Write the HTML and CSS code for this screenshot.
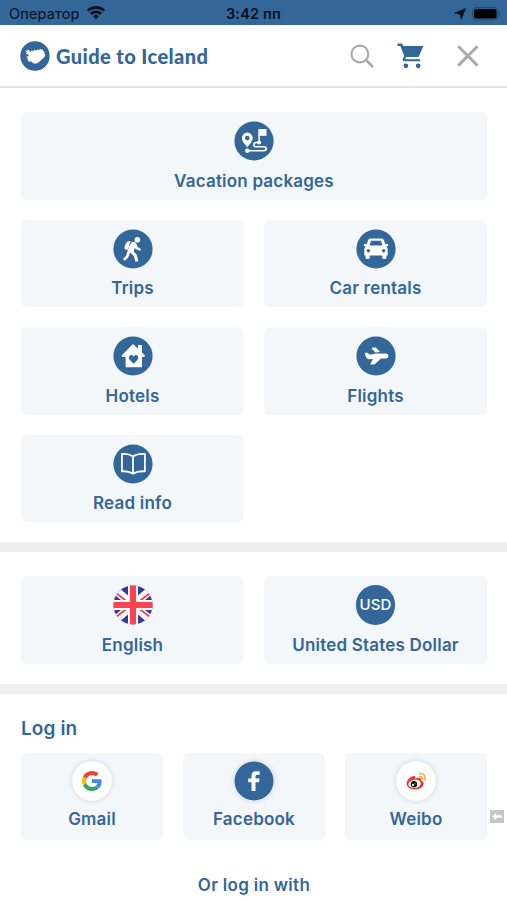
FILE: index.html
```html
<!DOCTYPE html>
<html lang="en">
<head>
<meta charset="utf-8">
<meta name="viewport" content="width=device-width, initial-scale=1">
<title>Guide to Iceland</title>
<link rel="stylesheet" href="styles.css">
</head>
<body>
<div class="status">
  <div class="carrier"><span>Оператор</span>
    <svg width="20" height="15" viewBox="0 0 20 15" fill="none" stroke="#06101c" stroke-width="2.7"><path d="M1.8 5.6a11.8 11.8 0 0 1 16.4 0M4.8 9a7.5 7.5 0 0 1 10.4 0"/><path d="M10 14.2 7 11.3a4.3 4.3 0 0 1 6 0z" fill="#06101c" stroke="none"/></svg>
  </div>
  <div class="time">3:42 пп</div>
  <div class="power">
    <svg width="12" height="12" viewBox="0 0 12 12"><path d="M11.5.5 7.2 11.4 6 6.2.7 5z" fill="#06101c" stroke="#06101c" stroke-width=".6"/></svg>
    <svg width="30" height="14" viewBox="0 0 30 14"><rect x=".6" y=".6" width="25.4" height="12.4" rx="4" fill="none" stroke="#234b73" stroke-width="1.1"/><rect x="2" y="2" width="22.6" height="9.6" rx="2.5" fill="#000"/><path d="M27.2 4.7q1.9 2 0 4.1z" fill="#1d4268"/></svg>
  </div>
</div>
<header class="header">
  <div class="brand">
    <svg width="30" height="30" viewBox="0 0 30 30"><circle cx="15" cy="15" r="14.7" fill="#336699"/><path d="m5.200 9.600 2.300.4-.4-1.800 2.200 1.200 1 1.800 1.500-2 1.100 1.200 1.400-1.600 1.500 1 1.600-1.400 1.400.7 1.700-1 1.300.7.800-.6.700 1.900 1.400.9-.4 1.600 1.100 1.400-1.400 2.800-2.600 1.900-2.300 2.200-2.800 1.900-2.900-.6-2.500-1.700-3.100-.1.700-1.900-2-.3 1.800-1.100-2.400-1.200 3-.8-.5-1.700-3-.5 1.700-.9z" fill="#fff"/></svg>
    <span>Guide to Iceland</span>
  </div>
  <div class="tools">
    <svg width="24" height="24" viewBox="0 0 24 24" fill="none" stroke="#aaa" stroke-width="2.1"><circle cx="9.9" cy="10" r="8.4"/><path d="m16 16 7 7" stroke-width="2.6"/></svg>
    <svg width="27" height="26" viewBox="0 0 27 26"><path d="M.5.6h4.400L6.400 3h20L22 12.900q-.6 1.200-2 1.200H9.200l-.8 1.400q-.3.800.4.800h14.300v2H6.800q-1.900-.7-1-2.600l1.500-2.700-4-10H.5z" fill="#336699"/><path d="M8.600 15.300h14.500" stroke="#336699" stroke-width=".1"/><circle cx="8.900" cy="22.800" r="2.400" fill="#336699"/><circle cx="21.200" cy="22.800" r="2.400" fill="#336699"/></svg>
    <svg width="22" height="22" viewBox="0 0 22 22" fill="none" stroke="#aaa" stroke-width="3"><path d="m1.200 1.200 19.400 19.400M20.600 1.200 1.200 20.600"/></svg>
  </div>
</header>
<main>
<section class="grid services">
  <a class="card wide">
    <svg class="icon" viewBox="0 0 40 40"><circle class="disc" cx="20" cy="20" r="19.6"/><path fill="#fff" fill-rule="evenodd" d="M13.300 26.500c-1-2.200-5.400-5.500-5.400-9.500a5.400 5.400 0 0 1 10.800 0c0 4-4.400 7.300-5.400 9.500zM13.300 14.800a2.300 2.300 0 1 0 0 4.600 2.300 2.300 0 0 0 0-4.600z"/><circle cx="13.300" cy="29.800" r="2.300" fill="#fff"/><circle cx="25.200" cy="21.500" r="2" fill="#fff"/><path d="M13.300 29.800h16.200q2.800-.2 2.800-2t-2.800-2h-7.300q-2.400 0-2.400-2.100t2.400-2.200h3V8.400" fill="none" stroke="#fff" stroke-width="1.600"/><path d="M24.700 8h7.800v6.800h-7.800z" fill="#fff"/></svg>
    <span>Vacation packages</span>
  </a>
  <a class="card">
    <svg class="icon" viewBox="0 0 40 40"><circle class="disc" cx="20" cy="20" r="19.6"/><circle cx="24.400" cy="10.800" r="2.800" fill="#fff"/><path d="M17.600 12.100c-3.600-.4-6.300 3.300-6 7.700.7 1.200 2.400 1.200 3.500.4z" fill="#fff"/><path d="m18.800 13 2.700-.2 2 2.100 1.100 3 3.400 2-.8 2-4.400-1.900-1-1.300-1.100 3.700 3 3.400 1.700 6.300-2.800.8-1.900-5.900-3.500-3.500-2 5-3.400 3.300-1.800-1.900 3-3.100 3.100-9.200z" fill="#fff"/></svg>
    <span>Trips</span>
  </a>
  <a class="card">
    <svg class="icon" viewBox="0 0 40 40"><circle class="disc" cx="20" cy="20" r="19.6"/><path fill="#fff" fill-rule="evenodd" d="M14.300 9.600h11.400q1.700 0 2.200 1.600l1.400 4.100 2.500-.6.500 2-2 .7q1.400 1 1.400 3.200v5.800h-1.300v2.300q0 1.400-1.400 1.400h-1.300q-1.400 0-1.400-1.400v-2.300H13.700v2.300q0 1.400-1.400 1.400H11q-1.400 0-1.400-1.400v-2.300H8.300v-5.800q0-2.200 1.400-3.200l-2-.7.500-2 2.500.6 1.400-4.100q.5-1.600 2.200-1.600zm.7 2.100-1.500 4.900h13L25 11.700zM12.400 20a1.700 1.700 0 1 0 0 3.400 1.700 1.700 0 0 0 0-3.400zm15.200 0a1.700 1.700 0 1 0 0 3.400 1.700 1.700 0 0 0 0-3.400z"/></svg>
    <span>Car rentals</span>
  </a>
  <a class="card">
    <svg class="icon" viewBox="0 0 40 40"><circle class="disc" cx="20" cy="20" r="19.6"/><path d="m20 8 5 4.800V9h4v7.500l3 3-.8 1.400H29v10.300H12.600V20.900H9.400l-.8-1.400z" fill="#fff"/><path d="M20.600 27.700c-1.800-1.900-4.700-3.600-4.700-6.100 0-2.800 3.500-3.400 4.700-.9 1.200-2.500 4.700-1.900 4.700.9 0 2.500-2.900 4.200-4.700 6.100z" class="disc"/></svg>
    <span>Hotels</span>
  </a>
  <a class="card">
    <svg class="icon" viewBox="0 0 40 40"><circle class="disc" cx="20" cy="20" r="19.6"/><path d="M8.700 16.700h2.500l3 2.100 5.300-1.300h10q2.900.1 2.900 2.500 0 2.300-2.900 2.500h-4.400l-6.700 6h-4.300l2.900-5.500-4.200.2q-3-.5-4.100-6.500zM15.600 12.500l1-.9h3.200l4.300 4.300-4.600.5z" fill="#fff"/></svg>
    <span>Flights</span>
  </a>
  <a class="card">
    <svg class="icon" viewBox="0 0 40 40"><circle class="disc" cx="20" cy="20" r="19.6"/><path d="M20 12.500Q15.500 9.300 8.900 10v17.300q6.600-.5 11.100 2.400 4.500-2.900 11.900-2.400V10Q24.500 9.300 20 12.500z" fill="none" stroke="#fff" stroke-width="1.800" stroke-linejoin="round"/><path d="M20 12.500v17" stroke="#fff" stroke-width="1.800"/></svg>
    <span>Read info</span>
  </a>
</section>
<section class="grid locale">
  <a class="card">
    <svg class="icon" viewBox="0 0 40 40"><clipPath id="round"><circle cx="20" cy="20" r="19.600"/></clipPath><g clip-path="url(#round)"><path fill="#343b98" d="M0 0h40v40H0z"/><path stroke="#fff" stroke-width="8" d="m0 3 40 34M40 3 0 37"/><path stroke="#f94454" stroke-width="2" d="m1 6.500 13 10M39 6.500l-13 10M1 33.500l13-10M39 33.500l-13-10"/><path stroke="#fff" stroke-width="10" d="M20 0v40M0 20h40"/><path stroke="#f94454" stroke-width="6.200" d="M20 0v40M0 20h40"/></g></svg>
    <span>English</span>
  </a>
  <a class="card"><div class="currency">USD</div><span>United States Dollar</span></a>
</section>
<section class="login">
  <h2>Log in</h2>
  <div class="grid accounts">
    <a class="card">
      <svg class="icon raised" viewBox="0 0 40 40"><circle cx="20" cy="20" r="19.600" fill="#fff"/><g transform="translate(10 10) scale(.417)"><path fill="#ea4335" d="M24 9.500c3.540 0 6.710 1.220 9.210 3.600l6.850-6.850C35.900 2.380 30.470 0 24 0 14.620 0 6.510 5.380 2.560 13.220l7.980 6.190C12.430 13.720 17.740 9.500 24 9.500z"/><path fill="#4285f4" d="M46.980 24.550c0-1.570-.15-3.090-.38-4.550H24v9.020h12.940c-.58 2.960-2.260 5.480-4.780 7.180l7.730 6c4.510-4.180 7.090-10.360 7.090-17.650z"/><path fill="#fbbc05" d="M10.530 28.590A14.500 14.500 0 0 1 10.530 19.410l-7.970-6.190a24 24 0 0 0 0 21.560z"/><path fill="#34a853" d="M24 48c6.480 0 11.930-2.130 15.890-5.810l-7.730-6c-2.150 1.450-4.920 2.300-8.160 2.300-6.260 0-11.570-4.220-13.470-9.910l-7.980 6.190C6.510 42.620 14.620 48 24 48z"/></g></svg>
      <span>Gmail</span>
    </a>
    <a class="card">
      <svg class="icon raised" viewBox="0 0 40 40"><circle class="disc" cx="20" cy="20" r="19.600"/><path fill="#fff" d="M17.500 30v-8.700h-3.300v-3.700h3.300v-2.700q0-4.700 4.900-4.700h3.300v3.600h-2.300q-1.900 0-1.900 1.700v2.100h4.100l-.6 3.700h-3.500V30z"/></svg>
      <span>Facebook</span>
    </a>
    <a class="card">
      <svg class="icon raised" viewBox="0 0 40 40"><circle cx="20" cy="20" r="19.600" fill="#fff"/><path d="M10.600 22.500c0-4 5.500-8.400 8.100-7.300q1.300.7.700 2.400c3.300-1.400 6.200-.9 5.500 1.800 2.700.8 3.400 2.800 2.400 5-3.200 5.800-16.700 5.300-16.700-1.900z" fill="#e6382f"/><ellipse cx="18.600" cy="22.800" rx="6.200" ry="4.200" transform="rotate(-8 18.600 22.800)" fill="#fff"/><circle cx="18" cy="23.300" r="3.200" fill="#171717"/><circle cx="17" cy="24.100" r="1.100" fill="#fff"/><circle cx="18.800" cy="22.800" r=".5" fill="#fff"/><path d="M23.200 12.700c4.200-.8 7 2.300 5.700 6.300M23.700 15.900c1.900-.4 3 .9 2.400 2.600" stroke="#f6a735" stroke-width="1.500" stroke-linecap="round" fill="none"/></svg>
      <span>Weibo</span>
    </a>
  </div>
  <p class="other">Or log in with</p>
</section>
</main>
<div class="back"><svg width="14" height="14" viewBox="0 0 14 14"><path d="M2 7l4.200-4v2.700H12v2.600H6.200V11z" fill="#fff"/></svg></div>
</body>
</html>
```
FILE: styles.css
```css
* { box-sizing: border-box; }
body {
  margin: 0;
  height: 900px;
  overflow: hidden;
  position: relative;
  background: #fff;
  color: #336699;
  font-family: Inter, "Liberation Sans", sans-serif;
}
.status {
  height: 25px;
  padding: 2px 5px 0 9px;
  background: #336699;
  color: #06101c;
  display: grid;
  grid-template-columns: 1fr auto 1fr;
  align-items: center;
  font-size: 14.5px;
}
.carrier, .power { display: flex; align-items: center; }
.carrier { gap: 6px; letter-spacing: 0.15px; }
.carrier svg { margin-top: -3px; }
.time { font-weight: 600; margin-left: -4px; letter-spacing: 0.2px; }
.power { justify-content: flex-end; gap: 6px; }
.power svg:first-child { margin-top: 1px; }
.header {
  height: 63px;
  padding: 0 28px 0 20px;
  border-bottom: 2px solid #e5e5e5;
  display: flex;
  align-items: center;
  justify-content: space-between;
}
.brand { display: flex; align-items: center; gap: 6px; }
.brand span {
  font: 900 20px/26px Lato, sans-serif;
  letter-spacing: 0.42px;
  white-space: nowrap;
}
.tools { display: flex; align-items: center; }
.tools svg:nth-child(2) { margin: 0 33px 0 23px; }
.grid { display: grid; grid-template-columns: 1fr 1fr; column-gap: 20px; }
.services { padding: 24px 20px 20px 21px; row-gap: 20px; }
.locale { padding: 24px 20px 20px 21px; border-top: 10px solid #efefef; }
.card {
  height: 87.5px;
  padding-top: 9px;
  border-radius: 6px;
  background: #f4f7fa;
  display: flex;
  flex-direction: column;
  align-items: center;
  font-weight: 600;
  font-size: 17px;
  line-height: 22px;
  letter-spacing: 0.2px;
  white-space: nowrap;
}
.wide { grid-column: 1 / -1; }
.card > span { margin-top: 8.5px; }
.icon { display: block; width: 40px; height: 40px; flex: none; }
.disc { fill: #336699; }
.raised { border-radius: 50%; box-shadow: 0 0 5px rgba(0, 0, 0, 0.15); }
.currency {
  width: 39.2px;
  height: 39.2px;
  margin: 0.4px;
  border-radius: 50%;
  background: #336699;
  color: #fff;
  font-size: 15px;
  font-weight: 500;
  line-height: 40px;
  letter-spacing: 0.2px;
  text-align: center;
}
.currency + span { margin-top: 9px; }
.login { padding: 22px 20px 0 21px; border-top: 10px solid #efefef; }
h2 { margin: 0 0 11px; font-size: 19px; line-height: 26px; font-weight: 600; letter-spacing: 0.1px; }
.accounts { grid-template-columns: repeat(3, 1fr); }
.accounts .card { padding-top: 8.5px; }
.accounts .card > span { margin-top: 6.5px; }
.other {
  margin: 34px 0 0;
  text-align: center;
  font-size: 17px;
  line-height: 22px;
  font-weight: 600;
  letter-spacing: 0.3px;
}
.back {
  position: absolute;
  left: 490px;
  top: 810px;
  width: 14px;
  height: 13px;
  background: #c6c6c6;
}
.back svg { display: block; width: 14px; height: 13px; }
```
